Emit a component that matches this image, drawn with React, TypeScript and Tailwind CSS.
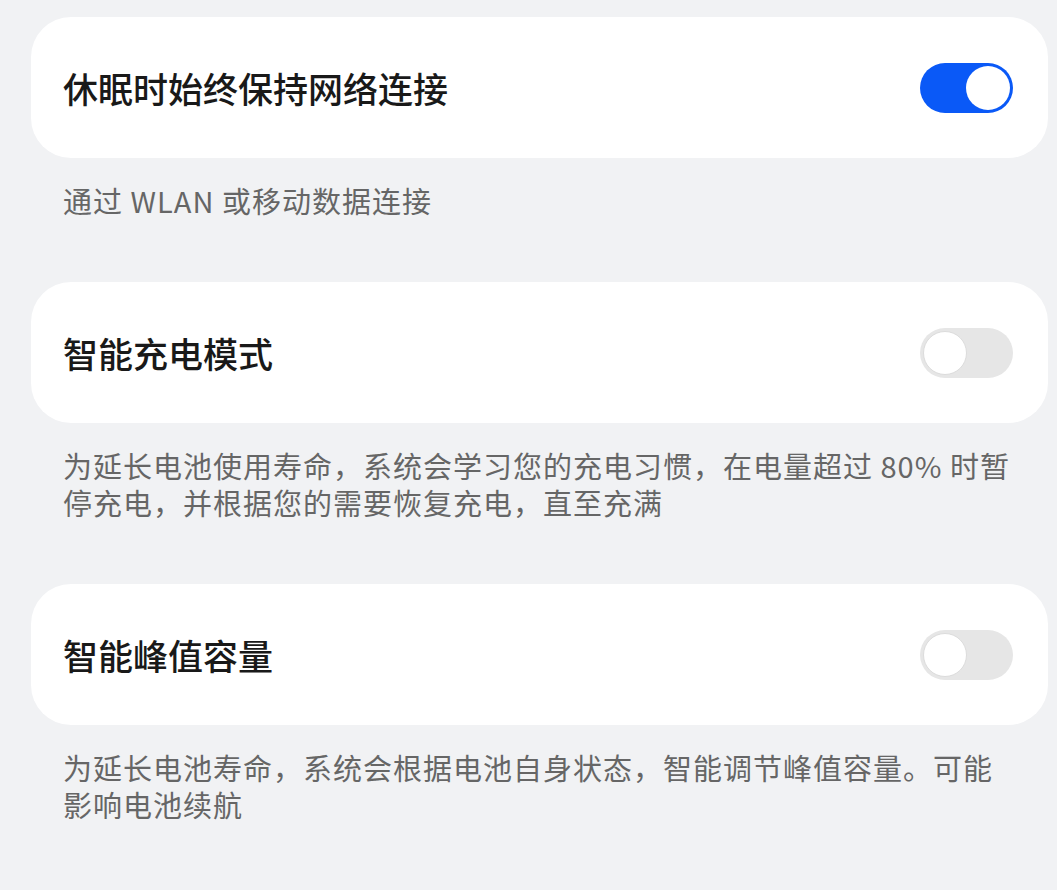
import React from 'react';

const font = { fontFamily: '"Noto Sans CJK SC", "Noto Sans", sans-serif' };

function Toggle({ on }: { on: boolean }) {
  return (
    <div
      className={`flex h-[50px] w-[93px] shrink-0 items-center rounded-full p-[3px] ${
        on ? 'justify-end bg-[#0a59f7]' : 'justify-start bg-[#e6e6e6]'
      }`}
    >
      <div
        className={`h-[44px] w-[44px] rounded-full bg-white ${
          on ? '' : 'border border-[#dcdcdc]'
        }`}
      />
    </div>
  );
}

function Setting({ title, on, lines }: { title: string; on: boolean; lines: string[] }) {
  return (
    <div>
      <div className="flex h-[141px] items-center justify-between rounded-[40px] bg-white pl-[32px] pr-[35px]">
        <span className="text-[35px] font-medium leading-none text-[#191919]">{title}</span>
        <Toggle on={on} />
      </div>
      <div className="mt-[24px] pl-[32px] text-[29px] leading-[37px] tracking-[1px] whitespace-nowrap text-[#666666]">
        {lines.map((l, i) => (
          <div key={i}>{l}</div>
        ))}
      </div>
    </div>
  );
}

export default function App() {
  return (
    <div
      className="flex min-h-[890px] w-[1057px] flex-col gap-[63px] overflow-hidden bg-[#f1f2f4] pt-[17px] pl-[31px] pr-[9px]"
      style={font}
    >
      <Setting title="休眠时始终保持网络连接" on={true} lines={['通过 WLAN 或移动数据连接']} />
      <Setting
        title="智能充电模式"
        on={false}
        lines={[
          '为延长电池使用寿命，系统会学习您的充电习惯，在电量超过 80% 时暂',
          '停充电，并根据您的需要恢复充电，直至充满',
        ]}
      />
      <Setting
        title="智能峰值容量"
        on={false}
        lines={[
          '为延长电池寿命，系统会根据电池自身状态，智能调节峰值容量。可能',
          '影响电池续航',
        ]}
      />
    </div>
  );
}
